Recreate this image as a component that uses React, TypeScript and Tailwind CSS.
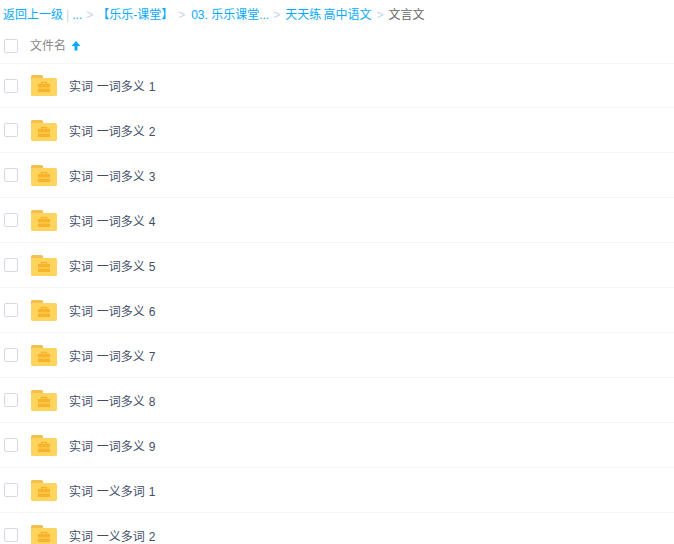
const names = [
  "实词 一词多义 1","实词 一词多义 2","实词 一词多义 3","实词 一词多义 4","实词 一词多义 5","实词 一词多义 6","实词 一词多义 7","实词 一词多义 8","实词 一词多义 9","实词 一义多词 1","实词 一义多词 2",
];

function Folder() {
  return (
    <svg width="26" height="21" viewBox="0 0 26 21" className="block">
      <path d="M0 1.5A1.5 1.5 0 0 1 1.5 0h9A1.5 1.5 0 0 1 12 1.5V4H0z" fill="#f2c04f" />
      <rect x="0" y="3" width="26" height="18" rx="1.5" fill="#ffd45c" />
      <path d="M10.5 9V7.5h5V9" fill="none" stroke="#f8b32d" strokeWidth="1.4" />
      <path d="M7 9h12v3.6H7zM7 13.4h12v3.6H7z" fill="#f8b32d" />
    </svg>
  );
}

function Sep() {
  return <span className="text-[#c5d4ea] mx-[5px]">&gt;</span>;
}

export default function App() {
  return (
    <div className="w-[674px] h-[544px] overflow-hidden bg-white font-['Liberation_Sans','Noto_Sans_CJK_SC',sans-serif] text-xs">
      <div className="h-[28px] pt-px flex items-center pl-[3px] text-[#09aaff] whitespace-nowrap">
        <span>返回上一级</span>
        <span className="text-[#c4d8ea] ml-[3px] mr-[3px]">|</span>
        <span>...</span>
        <span className="text-[#c5d4ea] ml-[4px] mr-[5px]">&gt;</span>
        <span className="-ml-px">【乐乐-课堂】</span>
        <span className="text-[#c5d4ea] ml-[5px] mr-[6px]">&gt;</span>
        <span>03. 乐乐课堂...</span>
        <span className="text-[#c5d4ea] ml-[4px] mr-[5px]">&gt;</span>
        <span className="[word-spacing:-1px]">天天练 高中语文</span>
        <Sep />
        <span className="text-[#666666]">文言文</span>
      </div>
      <div className="h-[36px] flex items-center border-b border-[#f4f5f9]">
        <span className="ml-[4px] w-[14px] h-[14px] rounded-[2px] border border-[#d5dae6]" />
        <span className="ml-[12px] text-[#888888]">文件名</span>
        <svg width="10" height="12" viewBox="0 0 10 12" className="ml-[5px]">
          <path d="M5 1 9.5 6H6.5V10.5H3.5V6H.5z" fill="#09aaff" />
        </svg>
      </div>
      {names.map((name, i) => (
        <div key={i} className={i === 0 ? "h-[44px] flex items-center border-b border-[#f4f5f9]" : "h-[45px] flex items-center border-b border-[#f4f5f9]"}>
          <span className="ml-[4px] w-[14px] h-[14px] rounded-[2px] border border-[#d5dae6]" />
          <span className="ml-[13px]"><Folder /></span>
          <span className={i === 0 ? "ml-[12px] pt-[2px] text-[#424e67] [word-spacing:0.5px]" : "ml-[12px] pt-[4px] text-[#424e67] [word-spacing:0.5px]"}>{name}</span>
        </div>
      ))}
    </div>
  );
}
